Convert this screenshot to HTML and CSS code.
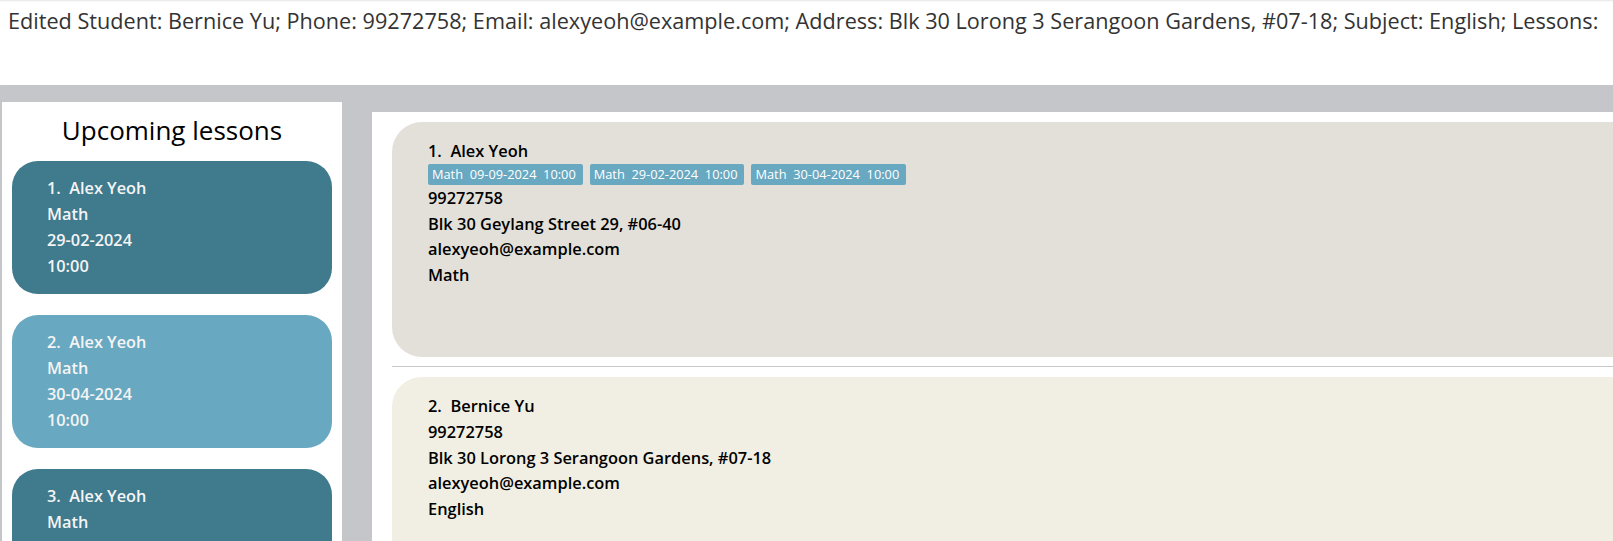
FILE: index.html
```html
<!DOCTYPE html>
<html>
<head>
<meta charset="utf-8">
<link rel="stylesheet" href="styles.css">
</head>
<body>
<div class="app">
  <div class="result">Edited Student: Bernice Yu; Phone: 99272758; Email: alexyeoh@example.com; Address: Blk 30 Lorong 3 Serangoon Gardens, #07-18; Subject: English; Lessons:</div>
  <div class="main">
    <aside class="upcoming">
      <h2 class="upcoming-title">Upcoming lessons</h2>
      <div class="lesson dark">
        <div>1.&nbsp;&nbsp;Alex Yeoh</div>
        <div>Math</div>
        <div>29-02-2024</div>
        <div>10:00</div>
      </div>
      <div class="lesson light">
        <div>2.&nbsp;&nbsp;Alex Yeoh</div>
        <div>Math</div>
        <div>30-04-2024</div>
        <div>10:00</div>
      </div>
      <div class="lesson dark">
        <div>3.&nbsp;&nbsp;Alex Yeoh</div>
        <div>Math</div>
        <div>09-09-2024</div>
        <div>10:00</div>
      </div>
    </aside>
    <section class="students">
      <div class="cell">
        <div class="card odd">
          <div class="line">1.&nbsp;&nbsp;Alex Yeoh</div>
          <div class="tags">
            <span class="tag">Math&nbsp;&nbsp;09-09-2024&nbsp;&nbsp;10:00</span>
            <span class="tag">Math&nbsp;&nbsp;29-02-2024&nbsp;&nbsp;10:00</span>
            <span class="tag">Math&nbsp;&nbsp;30-04-2024&nbsp;&nbsp;10:00</span>
          </div>
          <div class="line">99272758</div>
          <div class="line">Blk 30 Geylang Street 29, #06-40</div>
          <div class="line">alexyeoh@example.com</div>
          <div class="line">Math</div>
        </div>
      </div>
      <div class="cell">
        <div class="card even">
          <div class="line">2.&nbsp;&nbsp;Bernice Yu</div>
          <div class="line">99272758</div>
          <div class="line">Blk 30 Lorong 3 Serangoon Gardens, #07-18</div>
          <div class="line">alexyeoh@example.com</div>
          <div class="line">English</div>
        </div>
      </div>
    </section>
  </div>
</div>
</body>
</html>
```
FILE: styles.css
```css
html, body {
  margin: 0;
  padding: 0;
  height: 100%;
  overflow: hidden;
  background: #c5c6ca;
}
.app {
  display: flex;
  flex-direction: column;
  height: 100%;
  overflow: hidden;
  font-family: "Open Sans", "Noto Sans", sans-serif;
}
.result {
  flex: none;
  background: #fff;
  height: 85px;
  box-sizing: border-box;
  padding: 6px 0 0 8px;
  font-size: 21.65px;
  color: #333;
  white-space: nowrap;
  overflow: hidden;
  box-shadow: inset 0 2px 2px -1px #e6e6e6;
}
.main {
  flex: 1;
  display: flex;
  align-items: flex-start;
  padding-top: 17px;
  min-height: 0;
  overflow: hidden;
}
.upcoming {
  margin-left: 2px;
  width: 340px;
  flex: none;
  background: #fff;
  box-sizing: border-box;
  padding: 0 10px;
  height: 460px;
  overflow: hidden;
}
.upcoming-title {
  margin: 0;
  padding-top: 12px;
  height: 59px;
  box-sizing: border-box;
  text-align: center;
  font-weight: 400;
  font-size: 26px;
  line-height: 32px;
  color: #000;
}
.lesson {
  height: 133px;
  box-sizing: border-box;
  border-radius: 26px;
  padding: 15px 0 0 35px;
  margin-bottom: 21px;
  color: #f4f4f4;
  font-weight: 600;
  font-size: 16.3px;
  line-height: 25.9px;
}
.lesson.dark { background: #3f7a8d; }
.lesson.light { background: #69a8c1; }
.students {
  flex: 1;
  margin-left: 30px;
  margin-top: 10px;
  background: #fff;
  height: 460px;
  padding: 10px 0 0 20px;
  min-width: 0;
  overflow: hidden;
}
.cell {
  border-bottom: 1px solid #c8c8c8;
  padding-bottom: 9px;
  margin-bottom: 10px;
}
.card {
  height: 235px;
  box-sizing: border-box;
  border-radius: 30px 0 0 30px;
  padding: 16px 0 0 36px;
  font-weight: 600;
  font-size: 16.4px;
  line-height: 25.8px;
  color: #000;
}
.card.odd { background: #e3e0d9; }
.card.even { background: #f1eee3; }
.tags {
  display: flex;
  gap: 7px;
  height: 21px;
  align-items: center;
}
.tag {
  background: #69a8c1;
  color: #fff;
  font-size: 12.8px;
  font-weight: 400;
  line-height: 21px;
  padding: 0 7px 0 4px;
  border-radius: 2px;
}
```
